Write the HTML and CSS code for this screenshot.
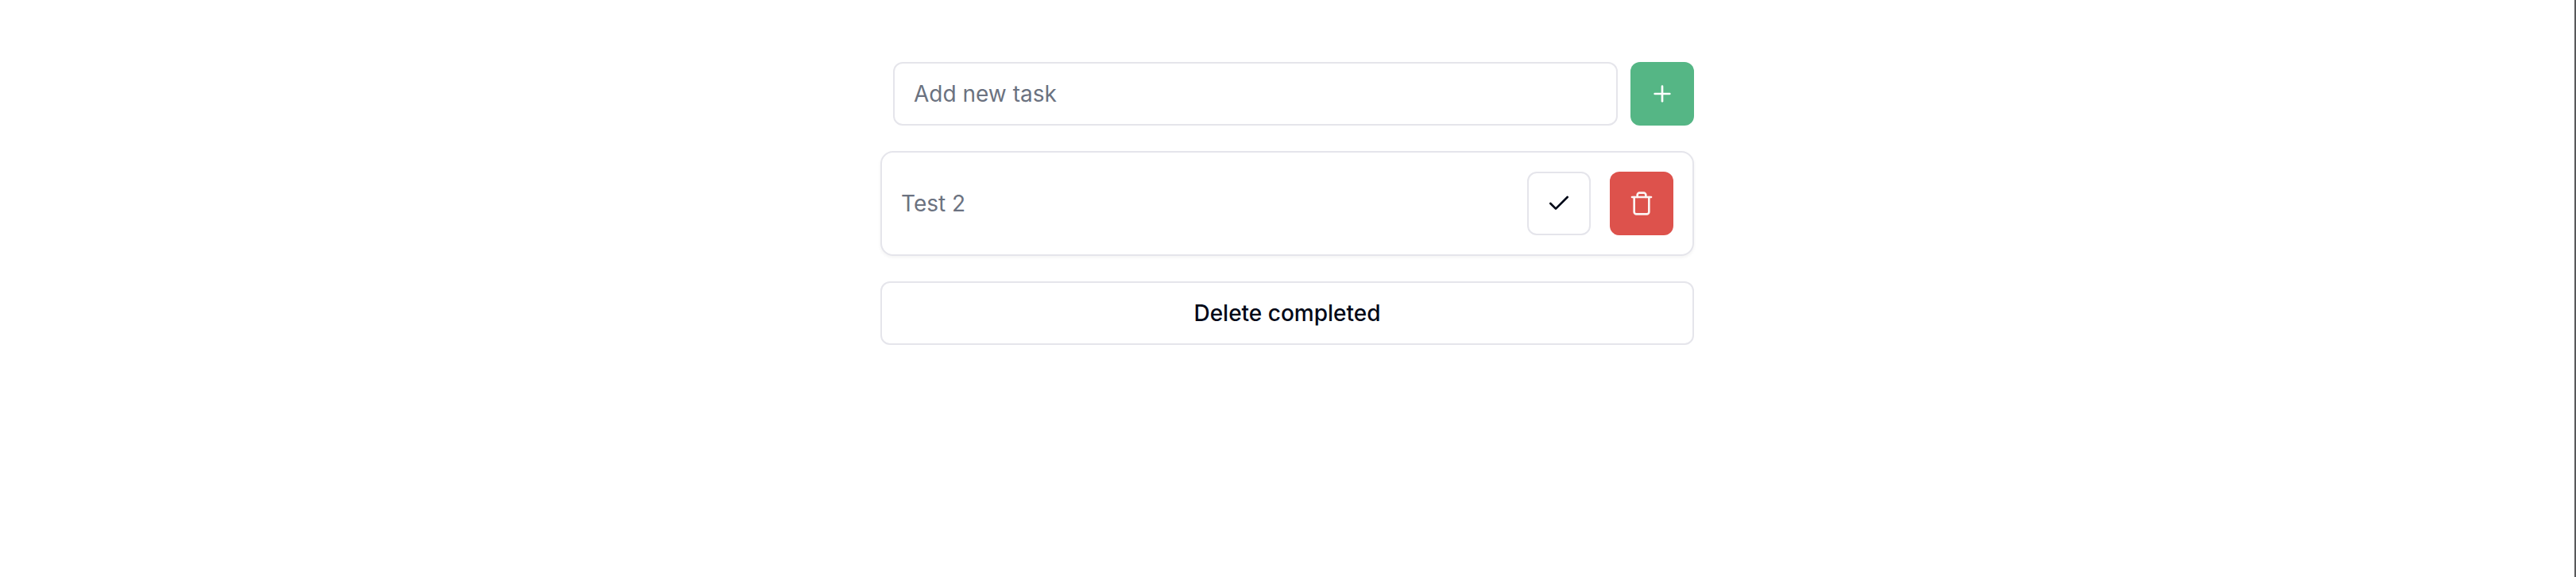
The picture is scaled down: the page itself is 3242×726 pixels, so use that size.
FILE: index.html
```html
<!DOCTYPE html>
<html lang="en">
<head>
<meta charset="utf-8">
<title>Tasks</title>
<link rel="stylesheet" href="styles.css">
</head>
<body>
<main class="tasks">
  <form class="add-form">
    <input class="add-input" type="text" placeholder="Add new task">
    <button class="btn btn-icon btn-add" type="button" aria-label="Add">
      <svg class="icon" viewBox="0 0 24 24"><path d="M5 12h14"/><path d="M12 5v14"/></svg>
    </button>
  </form>
  <div class="card">
    <span class="task-name">Test 2</span>
    <button class="btn btn-icon btn-outline" type="button" aria-label="Complete">
      <svg class="icon" viewBox="0 0 24 24"><path d="M20 6 9 17l-5-5"/></svg>
    </button>
    <button class="btn btn-icon btn-delete" type="button" aria-label="Delete">
      <svg class="icon" viewBox="0 0 24 24"><path d="M3 6h18"/><path d="M19 6v14c0 1-1 2-2 2H7c-1 0-2-1-2-2V6"/><path d="M8 6V4c0-1 1-2 2-2h4c1 0 2 1 2 2v2"/></svg>
    </button>
  </div>
  <button class="btn btn-outline" type="button">Delete completed</button>
</main>
</body>
</html>
```

FILE: styles.css
```css
* {
  box-sizing: border-box;
}

body {
  margin: 0;
  height: 100vh;
  padding-top: 78px;
  overflow: hidden;
  background: #fff;
  border-right: 2px solid #58595b;
  font-family: Inter, "Liberation Sans", sans-serif;
  font-size: 28px;
  line-height: 40px;
  color: #020817;
}

.tasks {
  display: flex;
  flex-direction: column;
  gap: 32px;
  width: 1024px;
  margin: 0 auto;
}

.add-form {
  display: flex;
  gap: 16px;
  padding-left: 16px;
}

.add-input {
  flex: 1;
  min-width: 0;
  height: 80px;
  padding: 0 24px;
  border: 2px solid #e5e5eb;
  border-radius: 12px;
  background: #fff;
  font: inherit;
}

.add-input::placeholder {
  color: #6b7280;
  opacity: 1;
}

.card {
  display: flex;
  align-items: center;
  gap: 24px;
  padding: 24px;
  border: 2px solid #e5e5eb;
  border-radius: 16px;
  background: #fff;
  box-shadow: 0 2px 4px rgba(0, 0, 0, 0.05);
}

.task-name {
  flex: 1;
  color: #6b7280;
}

.btn {
  display: flex;
  align-items: center;
  justify-content: center;
  height: 80px;
  padding: 0;
  border: 0;
  border-radius: 12px;
  font: inherit;
  font-weight: 500;
  color: #020817;
}

.btn-icon {
  flex: none;
  width: 80px;
}

.btn-outline {
  border: 2px solid #e5e5eb;
  background: #fff;
}

.btn-add {
  background: #55b685;
  color: #fff;
}

.btn-delete {
  background: #dd524c;
  color: #fbf3f2;
}

.icon {
  width: 32px;
  height: 32px;
  fill: none;
  stroke: currentColor;
  stroke-width: 2;
  stroke-linecap: round;
  stroke-linejoin: round;
}
```
